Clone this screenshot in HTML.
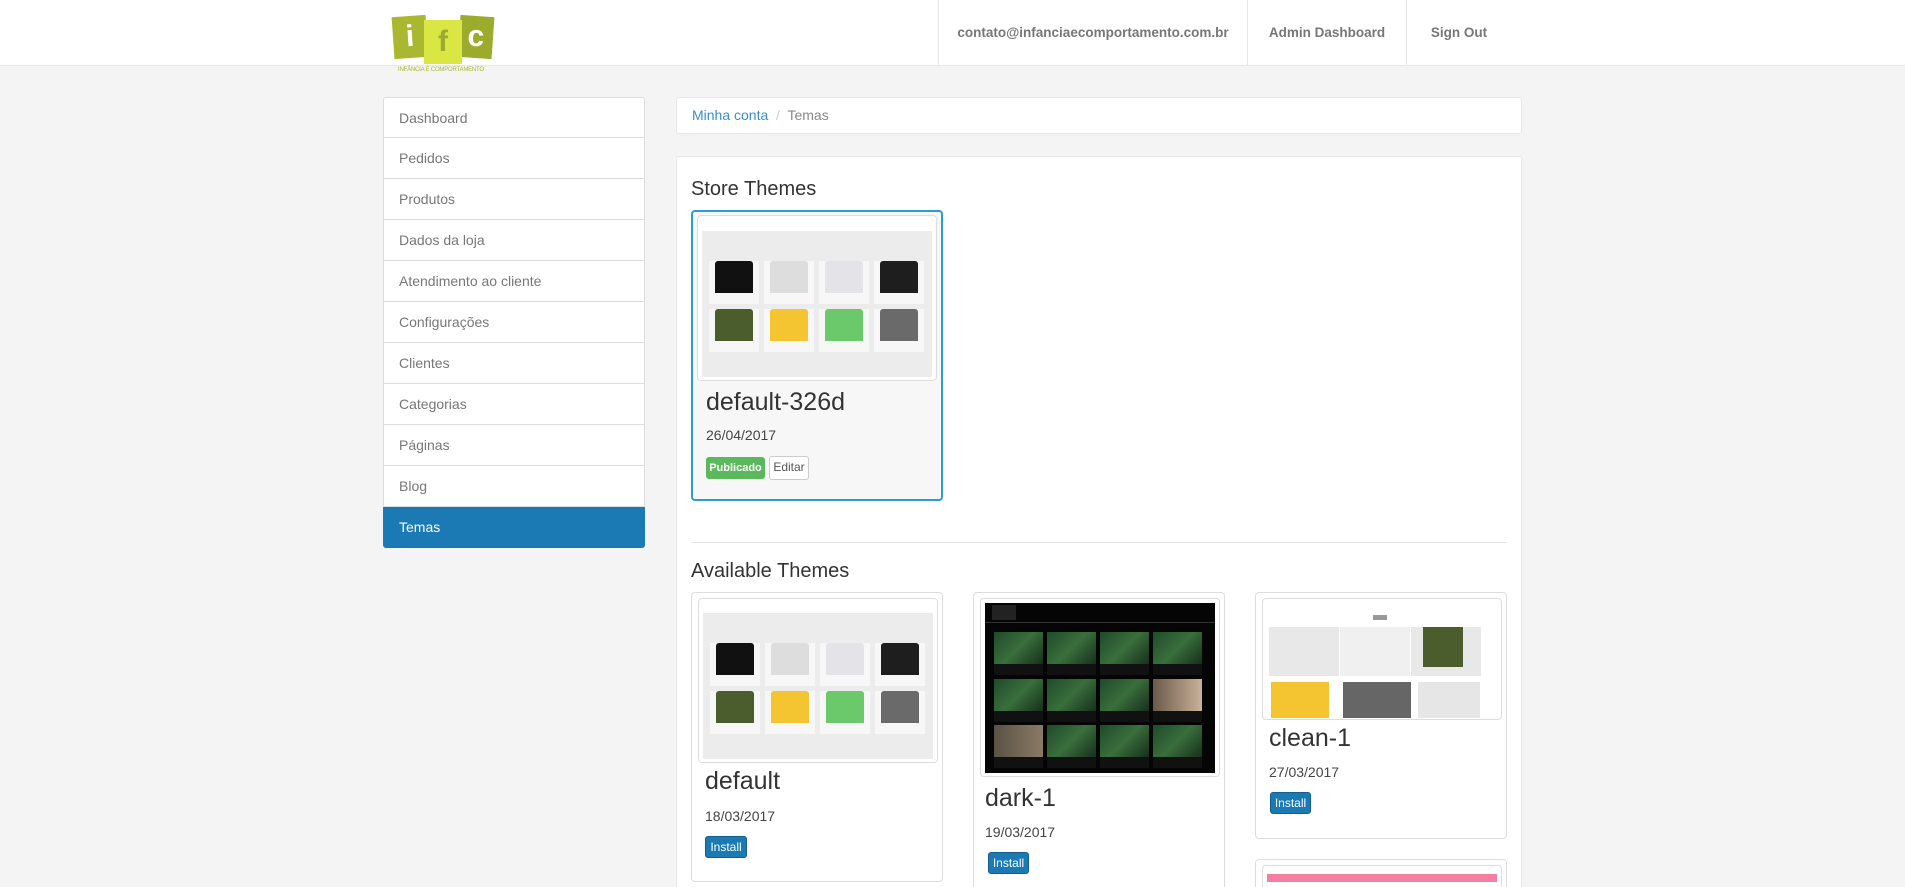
<!DOCTYPE html>
<html><head><meta charset="utf-8">
<style>
*{box-sizing:border-box;margin:0;padding:0}
html,body{width:1905px;height:887px;overflow:hidden}
body{background:#f4f4f4;font-family:"Liberation Sans",sans-serif;color:#555;position:relative}
.abs{position:absolute}
.hdr{left:0;top:0;width:1905px;height:66px;background:#fff;border-bottom:1px solid #e7e7e7}
.nav{top:0;height:66px;line-height:66px;font-size:13.5px;font-weight:bold;color:#777;text-align:center;border-left:1px solid #e7e7e7}
.side{left:383px;top:97px;width:262px}
.side div{height:41px;line-height:40px;padding-left:15px;font-size:14px;color:#777;background:#fff;border:1px solid #ddd;border-top:none}
.side div:first-child{border-top:1px solid #ddd;border-radius:3px 3px 0 0}
.side div.act{background:#1b79b4;color:#fff;border-color:#1b79b4;border-radius:0 0 3px 3px}
.bc{left:676px;top:97px;width:846px;height:37px;background:#fff;border:1px solid #e8e8e8;border-radius:3px;font-size:14px;line-height:35px;padding-left:15px;color:#888}
.panel{left:676px;top:156px;width:846px;height:760px;background:#fff;border:1px solid #e8e8e8;border-radius:3px}
h3{position:absolute;font-weight:normal;font-size:20px;color:#333}
.card{position:absolute;background:#fff;border:1px solid #ddd;border-radius:4px}
.card.cur{background:#f7f7f7;border:2px solid #2e9ad8}
.thumb{position:absolute;border:1px solid #ddd;border-radius:4px;background:#fff;overflow:hidden}
.title{position:absolute;font-size:25px;color:#333}
.date{position:absolute;font-size:14px;color:#444}
.btn{position:absolute;height:22px;line-height:20px;font-size:12px;color:#fff;background:#1b79b4;border:1px solid #155f8e;border-radius:3px;text-align:center}
.lt{position:absolute;left:4px;top:3px;width:230px;height:157px;background:#ececec}
.lt .top{position:absolute;left:0;top:0;width:230px;height:11px;background:#fff}
.cell{position:absolute;width:50px;height:43px;background:#f7f7f7}
.cell i{position:absolute;left:6px;top:0;width:38px;height:32px;border-radius:3px 3px 0 0}
.dk{position:absolute;left:4px;top:4px;width:230px;height:170px;background:#050505}
.dc{position:absolute;width:49px;height:43px;background:#111}
.dc i{position:absolute;left:0;top:0;width:49px;height:32px;background:linear-gradient(135deg,#1f4a2a,#3a6e3c 50%,#16301c)}
</style></head><body>
<div class="abs hdr"></div>
<div class="abs" style="left:393px;top:16px;width:34px;height:42px;background:#a9b830;transform:rotate(-4deg);color:#fff;font:bold 30px 'Liberation Sans';text-align:center;line-height:42px">i</div>
<div class="abs" style="left:459px;top:16px;width:34px;height:42px;background:#9bab2b;transform:rotate(4deg);color:#fff;font:bold 30px 'Liberation Sans';text-align:center;line-height:42px">c</div>
<div class="abs" style="left:424px;top:20px;width:38px;height:44px;background:#d9e644;color:#9bab2b;font:bold 30px 'Liberation Sans';text-align:center;line-height:44px">f</div>
<div class="abs" style="left:398px;top:67px;font-size:6px;color:#a9b830;letter-spacing:-0.2px">INFÂNCIA E COMPORTAMENTO</div>
<div class="abs nav" style="left:938px;width:309px">contato@infanciaecomportamento.com.br</div>
<div class="abs nav" style="left:1247px;width:159px">Admin Dashboard</div>
<div class="abs nav" style="left:1406px;width:105px">Sign Out</div>

<div class="abs side">
<div>Dashboard</div><div>Pedidos</div><div>Produtos</div><div>Dados da loja</div><div>Atendimento ao cliente</div><div>Configurações</div><div>Clientes</div><div>Categorias</div><div>Páginas</div><div>Blog</div><div class="act">Temas</div>
</div>

<div class="abs bc"><span style="color:#3a8fc9">Minha conta</span> <span style="color:#ccc">&nbsp;/&nbsp;</span> Temas</div>
<div class="abs panel"></div>
<h3 style="left:691px;top:178px">Store Themes</h3>

<div class="card cur" style="left:691px;top:210px;width:252px;height:291px">
 <div class="thumb" style="left:4px;top:3px;width:240px;height:166px">
  <div class="lt" style="left:4px;top:4px;height:157px"><div class="top"></div>
   <div class="cell" style="left:7px;top:41px"><i style="background:#111"></i></div>
   <div class="cell" style="left:62px;top:41px"><i style="background:#ddd"></i></div>
   <div class="cell" style="left:117px;top:41px"><i style="background:#e4e4e8"></i></div>
   <div class="cell" style="left:172px;top:41px"><i style="background:#1e1e1e"></i></div>
   <div class="cell" style="left:7px;top:89px"><i style="background:#4b5d2c"></i></div>
   <div class="cell" style="left:62px;top:89px"><i style="background:#f4c531"></i></div>
   <div class="cell" style="left:117px;top:89px"><i style="background:#6bc96b"></i></div>
   <div class="cell" style="left:172px;top:89px"><i style="background:#6a6a6a"></i></div>
  </div>
 </div>
 <div class="title" style="left:13px;top:176px">default-326d</div>
 <div class="date" style="left:13px;top:215px">26/04/2017</div>
 <div class="btn" style="left:13px;top:245px;width:59px;background:#5cb85c;border-color:#5cb85c;font-weight:bold;font-size:11px">Publicado</div>
 <div class="btn" style="left:76px;top:244px;width:40px;height:24px;background:#fff;color:#555;border-color:#ccc">Editar</div>
</div>

<div class="abs" style="left:691px;top:542px;width:816px;height:1px;background:#e5e5e5"></div>
<h3 style="left:691px;top:560px">Available Themes</h3>

<div class="card" style="left:691px;top:592px;width:252px;height:290px">
 <div class="thumb" style="left:6px;top:5px;width:240px;height:165px">
  <div class="lt"><div class="top"></div>
   <div class="cell" style="left:7px;top:41px"><i style="background:#111"></i></div>
   <div class="cell" style="left:62px;top:41px"><i style="background:#ddd"></i></div>
   <div class="cell" style="left:117px;top:41px"><i style="background:#e4e4e8"></i></div>
   <div class="cell" style="left:172px;top:41px"><i style="background:#1e1e1e"></i></div>
   <div class="cell" style="left:7px;top:89px"><i style="background:#4b5d2c"></i></div>
   <div class="cell" style="left:62px;top:89px"><i style="background:#f4c531"></i></div>
   <div class="cell" style="left:117px;top:89px"><i style="background:#6bc96b"></i></div>
   <div class="cell" style="left:172px;top:89px"><i style="background:#6a6a6a"></i></div>
  </div>
 </div>
 <div class="title" style="left:13px;top:174px">default</div>
 <div class="date" style="left:13px;top:215px">18/03/2017</div>
 <div class="btn" style="left:13px;top:243px;width:42px">Install</div>
</div>

<div class="card" style="left:973px;top:592px;width:252px;height:300px">
 <div class="thumb" style="left:6px;top:5px;width:240px;height:179px">
  <div class="dk">
   <div style="position:absolute;left:7px;top:2px;width:24px;height:15px;background:#222"></div>
   <div style="position:absolute;left:0;top:19px;width:230px;height:1px;background:#333"></div>
   <div class="dc" style="left:9px;top:29px"><i></i></div><div class="dc" style="left:62px;top:29px"><i></i></div><div class="dc" style="left:115px;top:29px"><i></i></div><div class="dc" style="left:168px;top:29px"><i></i></div>
   <div class="dc" style="left:9px;top:76px"><i></i></div><div class="dc" style="left:62px;top:76px"><i></i></div><div class="dc" style="left:115px;top:76px"><i></i></div><div class="dc" style="left:168px;top:76px"><i style="background:linear-gradient(90deg,#6b5a4a,#c9b29a)"></i></div>
   <div class="dc" style="left:9px;top:122px"><i style="background:linear-gradient(90deg,#5a5244,#8a7a66)"></i></div><div class="dc" style="left:62px;top:122px"><i></i></div><div class="dc" style="left:115px;top:122px"><i></i></div><div class="dc" style="left:168px;top:122px"><i></i></div>
  </div>
 </div>
 <div class="title" style="left:11px;top:191px">dark-1</div>
 <div class="date" style="left:11px;top:231px">19/03/2017</div>
 <div class="btn" style="left:14px;top:259px;width:41px">Install</div>
</div>

<div class="card" style="left:1255px;top:592px;width:252px;height:247px">
 <div class="thumb" style="left:6px;top:5px;width:240px;height:122px">
  <div style="position:absolute;left:110px;top:16px;width:14px;height:5px;background:#999"></div>
  <div style="position:absolute;left:6px;top:28px;width:70px;height:49px;background:#e8e8e8"></div>
  <div style="position:absolute;left:77px;top:28px;width:70px;height:49px;background:#f0f0f0"></div>
  <div style="position:absolute;left:148px;top:28px;width:70px;height:49px;background:#e8e8e8"></div>
  <div style="position:absolute;left:160px;top:28px;width:40px;height:40px;background:#4b5d2c"></div>
  <div style="position:absolute;left:8px;top:83px;width:58px;height:36px;background:#f4c531"></div>
  <div style="position:absolute;left:80px;top:83px;width:68px;height:36px;background:#666"></div>
  <div style="position:absolute;left:155px;top:83px;width:62px;height:36px;background:#e6e6e6"></div>
 </div>
 <div class="title" style="left:13px;top:131px">clean-1</div>
 <div class="date" style="left:13px;top:171px">27/03/2017</div>
 <div class="btn" style="left:14px;top:199px;width:41px">Install</div>
</div>

<div class="card" style="left:1255px;top:859px;width:252px;height:60px">
 <div class="thumb" style="left:6px;top:5px;width:240px;height:60px">
  <div style="position:absolute;left:4px;top:8px;width:230px;height:8px;background:#f47fa0"></div>
 </div>
</div>
</body></html>
